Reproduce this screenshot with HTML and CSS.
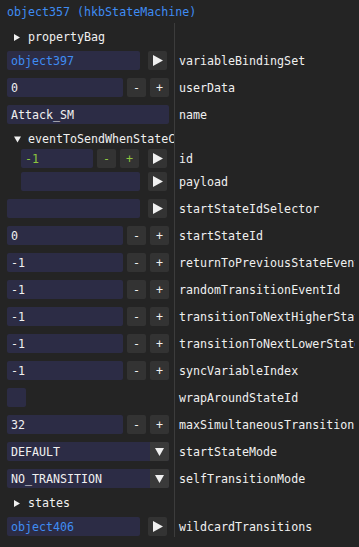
FILE: index.html
```html
<!DOCTYPE html>
<html>
<head>
<meta charset="utf-8">
<link rel="stylesheet" href="styles.css">
</head>
<body>
<div class="header">object357 (hkbStateMachine)</div>
<div class="table">
  <div class="row tree first">
    <div class="l tl"><svg class="tri" width="7" height="7" viewBox="0 0 7 7"><polygon points="0,0 6,3.5 0,7" fill="#f0f0f0"/></svg>propertyBag</div>
    <div class="r"></div>
  </div>
  <div class="row after-tree">
    <div class="l"><div class="field w-ref blue">object397</div><div class="btn go"><svg width="10" height="11" viewBox="0 0 10 11"><polygon points="0,0 10,5.5 0,11" fill="#f0f0f0"/></svg></div></div>
    <div class="r">variableBindingSet</div>
  </div>
  <div class="row">
    <div class="l"><div class="field w-int">0</div><div class="btn">-</div><div class="btn">+</div></div>
    <div class="r">userData</div>
  </div>
  <div class="row">
    <div class="l"><div class="field w-full">Attack_SM</div></div>
    <div class="r">name</div>
  </div>
  <div class="row tree">
    <div class="l tl"><svg class="tri" width="7" height="7" viewBox="0 0 7 7"><polygon points="0,0.5 7,0.5 3.5,6.5" fill="#f0f0f0"/></svg>eventToSendWhenStateChange</div>
    <div class="r"></div>
  </div>
  <div class="row nested-first">
    <div class="l nested"><div class="field w-nint green">-1</div><div class="btn green">-</div><div class="btn green">+</div><div class="btn go-wide"><svg width="10" height="11" viewBox="0 0 10 11"><polygon points="0,0 10,5.5 0,11" fill="#f0f0f0"/></svg></div></div>
    <div class="r">id</div>
  </div>
  <div class="row nested-next">
    <div class="l nested"><div class="field w-npay"></div><div class="btn go"><svg width="10" height="11" viewBox="0 0 10 11"><polygon points="0,0 10,5.5 0,11" fill="#f0f0f0"/></svg></div></div>
    <div class="r">payload</div>
  </div>
  <div class="row">
    <div class="l"><div class="field w-ref"></div><div class="btn go"><svg width="10" height="11" viewBox="0 0 10 11"><polygon points="0,0 10,5.5 0,11" fill="#f0f0f0"/></svg></div></div>
    <div class="r">startStateIdSelector</div>
  </div>
  <div class="row">
    <div class="l"><div class="field w-int">0</div><div class="btn">-</div><div class="btn">+</div></div>
    <div class="r">startStateId</div>
  </div>
  <div class="row">
    <div class="l"><div class="field w-int">-1</div><div class="btn">-</div><div class="btn">+</div></div>
    <div class="r">returnToPreviousStateEventId</div>
  </div>
  <div class="row">
    <div class="l"><div class="field w-int">-1</div><div class="btn">-</div><div class="btn">+</div></div>
    <div class="r">randomTransitionEventId</div>
  </div>
  <div class="row">
    <div class="l"><div class="field w-int">-1</div><div class="btn">-</div><div class="btn">+</div></div>
    <div class="r">transitionToNextHigherStateEventId</div>
  </div>
  <div class="row">
    <div class="l"><div class="field w-int">-1</div><div class="btn">-</div><div class="btn">+</div></div>
    <div class="r">transitionToNextLowerStateEventId</div>
  </div>
  <div class="row">
    <div class="l"><div class="field w-int">-1</div><div class="btn">-</div><div class="btn">+</div></div>
    <div class="r">syncVariableIndex</div>
  </div>
  <div class="row">
    <div class="l"><div class="check"></div></div>
    <div class="r">wrapAroundStateId</div>
  </div>
  <div class="row">
    <div class="l"><div class="field w-int">32</div><div class="btn">-</div><div class="btn">+</div></div>
    <div class="r">maxSimultaneousTransitions</div>
  </div>
  <div class="row">
    <div class="l"><div class="combo"><div class="combo-text">DEFAULT</div><div class="combo-arrow"><svg width="9" height="8" viewBox="0 0 9 8"><polygon points="0,0 9,0 4.5,8" fill="#f0f0f0"/></svg></div></div></div>
    <div class="r">startStateMode</div>
  </div>
  <div class="row">
    <div class="l"><div class="combo"><div class="combo-text">NO_TRANSITION</div><div class="combo-arrow"><svg width="9" height="8" viewBox="0 0 9 8"><polygon points="0,0 9,0 4.5,8" fill="#f0f0f0"/></svg></div></div></div>
    <div class="r">selfTransitionMode</div>
  </div>
  <div class="row tree">
    <div class="l tl"><svg class="tri" width="7" height="7" viewBox="0 0 7 7"><polygon points="0,0 6,3.5 0,7" fill="#f0f0f0"/></svg>states</div>
    <div class="r"></div>
  </div>
  <div class="row after-tree last">
    <div class="l"><div class="field w-ref blue">object406</div><div class="btn go"><svg width="10" height="11" viewBox="0 0 10 11"><polygon points="0,0 10,5.5 0,11" fill="#f0f0f0"/></svg></div></div>
    <div class="r">wildcardTransitions</div>
  </div>
</div>
</body>
</html>
```
FILE: styles.css
```css
html, body {
  margin: 0;
  padding: 0;
}
body {
  width: 359px;
  height: 547px;
  overflow: hidden;
  background: #242424;
  color: #f0f0f0;
  font-family: "DejaVu Sans Mono", "Liberation Mono", monospace;
  font-size: 11.65px;
}
.header {
  height: 23px;
  padding-left: 7px;
  display: flex;
  align-items: center;
  color: #3f8cf3;
  white-space: nowrap;
}
.table {
  width: 355px;
}
.row {
  display: grid;
  grid-template-columns: 174px 181px;
  --pt: 8px;
  --h: 19px;
}
.row.tree { --pt: 7px; --h: 16px; }
.row.tree.first { --pt: 6px; }
.row.after-tree { --pt: 6px; }
.row.nested-first { --pt: 2px; }
.row.nested-next { --pt: 4px; }
.row.last > .r { padding-bottom: 1px; }
.l, .r {
  padding-top: var(--pt);
  height: var(--h);
  display: flex;
  align-items: center;
  white-space: nowrap;
  overflow: hidden;
  min-width: 0;
}
.l {
  padding-left: 7px;
  gap: 4px;
}
.l.nested { padding-left: 21px; }
.l.tl { padding-left: 14px; }
.tri { flex: none; margin-right: 3px; }
.r {
  border-left: 1px solid #3c3c3c;
  padding-left: 4px;
}
.field {
  flex: none;
  height: 19px;
  box-sizing: border-box;
  padding-left: 4px;
  background: #2c2c45;
  border-radius: 2px;
  display: flex;
  align-items: center;
}
.w-ref { width: 133px; }
.w-int { width: 116px; }
.w-full { width: 162px; }
.w-nint { width: 72px; }
.w-npay { width: 119px; }
.blue { color: #3f8cf3; }
.green { color: #8dc63f; }
.btn {
  flex: none;
  width: 19px;
  height: 19px;
  background: #333333;
  border-radius: 2px;
  display: flex;
  align-items: center;
  justify-content: center;
}
.go { margin-left: 4px; }
.go-wide { margin-left: 5px; }
.check {
  width: 19px;
  height: 19px;
  background: #2c2c45;
  border-radius: 2px;
}
.combo {
  width: 162px;
  height: 19px;
  display: flex;
  background: #2c2c45;
  border-radius: 2px;
  overflow: hidden;
}
.combo-text {
  flex: 1;
  padding-left: 4px;
  display: flex;
  align-items: center;
}
.combo-arrow {
  width: 19px;
  background: #3a3a3a;
  display: flex;
  align-items: center;
  justify-content: center;
}
```
